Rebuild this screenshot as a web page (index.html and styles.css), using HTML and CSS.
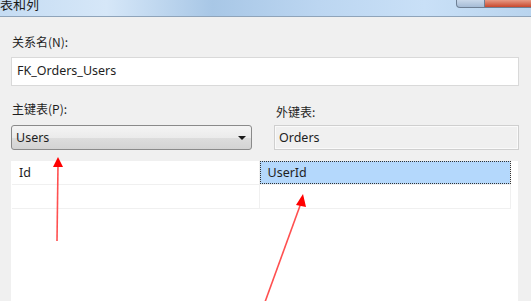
FILE: index.html
```html
<!DOCTYPE html>
<html>
<head>
<meta charset="utf-8">
<link rel="stylesheet" href="styles.css">
</head>
<body>
<div class="window">
  <div class="titlebar">
    <span class="title">表和列</span>
    <div class="caption-buttons">
      <div class="cap-btn"></div>
      <div class="cap-btn close"></div>
    </div>
  </div>
  <div class="content">
    <div class="label first">关系名(N):</div>
    <div class="textbox">FK_Orders_Users</div>
    <div class="pair">
      <div class="col">
        <div class="label">主键表(P):</div>
        <div class="select"><span>Users</span><span class="caret"></span></div>
      </div>
      <div class="col right">
        <div class="label fk">外键表:</div>
        <div class="readonly">Orders</div>
      </div>
    </div>
    <div class="grid">
      <div class="row">
        <div class="cell">Id</div>
        <div class="cell sel">UserId</div>
      </div>
      <div class="row">
        <div class="cell"></div>
        <div class="cell"></div>
      </div>
    </div>
  </div>
  <svg class="arrows" width="531" height="301" viewBox="0 0 531 301">
    <g stroke="#ff5050" stroke-width="1.6" fill="none">
      <line x1="57" y1="241" x2="58" y2="165"/>
      <line x1="265" y1="302" x2="301" y2="203"/>
    </g>
    <g fill="#ff0000">
      <polygon points="58,157 53,167 63,167"/>
      <polygon points="303,194 296,205 306,207"/>
    </g>
  </svg>
</div>
</body>
</html>
```

FILE: styles.css
```css
html, body {
  margin: 0;
  padding: 0;
  background: #f0f0f0;
}
body {
  width: 531px;
  height: 301px;
  overflow: hidden;
  font-family: "Noto Sans", "Noto Sans CJK SC", sans-serif;
  font-size: 12px;
  color: #1e1e1e;
}
.window {
  position: relative;
  width: 531px;
  height: 301px;
}
.titlebar {
  height: 16px;
  border-bottom: 1px solid #8fa4ba;
  background: linear-gradient(90deg, #c5dcf3 0%, #d6e7f8 20%, #a8c7e6 40%, #bcd6f1 60%, #c9e0f7 80%, #b9d4ee 100%);
  display: flex;
  justify-content: space-between;
  align-items: flex-start;
}
.title {
  font-family: "Noto Sans CJK SC", sans-serif;
  font-size: 13px;
  line-height: 13px;
  margin-top: -3px;
  color: #1a1a1a;
}
.caption-buttons {
  display: flex;
  margin-right: -10px;
}
.cap-btn {
  width: 27px;
  height: 7px;
  border: 1px solid #6e7f94;
  border-top: none;
  border-radius: 0 0 0 4px;
  background: linear-gradient(#c9d8ea, #a6bcd6);
}
.cap-btn.close {
  width: 55px;
  border-radius: 0 0 4px 0;
  border-left: none;
  background: linear-gradient(#e79a85, #c8482d);
}
.content {
  padding: 0 12px 0 11px;
  display: flex;
  flex-direction: column;
}
.label {
  font-family: "Noto Sans CJK SC", sans-serif;
  font-size: 12px;
  line-height: 16px;
  height: 16px;
  margin-left: 1px;
  color: #1e1e1e;
}
.label.first {
  margin-top: 17px;
}
.textbox {
  margin-top: 7px;
  height: 27px;
  border: 1px solid #d9d9d9;
  background: #fff;
  line-height: 26px;
  padding-left: 5px;
  font-size: 12.5px;
}
.pair {
  display: flex;
  justify-content: space-between;
  margin-top: 15px;
}
.col {
  width: 241px;
  display: flex;
  flex-direction: column;
}
.col.right {
  width: 245px;
}
.label.fk {
  margin-top: 3px;
  height: 13px;
  margin-left: 2px;
}
.select {
  margin-top: 8px;
  height: 23px;
  border: 1px solid #8a8a8a;
  border-radius: 3px;
  background: linear-gradient(#f4f4f4 0%, #ebebeb 50%, #dddddd 51%, #d3d3d3 100%);
  display: flex;
  align-items: center;
  justify-content: space-between;
  padding: 0 5px 0 4px;
  font-size: 12.5px;
}
.caret {
  width: 0;
  height: 0;
  border-left: 4px solid transparent;
  border-right: 4px solid transparent;
  border-top: 4px solid #1a1a1a;
}
.readonly {
  margin-top: 8px;
  height: 23px;
  border: 1px solid #cfcfcf;
  box-shadow: inset 0 0 0 1px #fafafa;
  background: #f0f0f0;
  line-height: 23px;
  padding-left: 4px;
  font-size: 12.5px;
}
.grid {
  margin-top: 11px;
  height: 150px;
  background: #fff;
  margin-right: 1px;
}
.row {
  display: flex;
  margin-left: 1px;
  width: 499px;
  height: 23px;
  border-bottom: 1px solid #f0f0f0;
}
.cell {
  width: 240px;
  line-height: 23px;
  padding-left: 7px;
  border-right: 1px solid #f0f0f0;
  font-size: 12.5px;
}
.cell:last-child {
  width: 243px;
  padding-left: 8px;
}
.cell.sel {
  background: #b4d8fc;
  outline: 1px dotted #333;
  outline-offset: -1px;
}
.arrows {
  position: absolute;
  left: 0;
  top: 0;
  pointer-events: none;
}
```
